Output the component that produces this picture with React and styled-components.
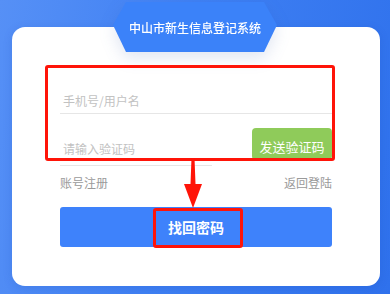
import React from "react";
import styled, { createGlobalStyle } from "styled-components";

const Global = createGlobalStyle`
  html, body { margin: 0; padding: 0; }
  body { font-family: "Noto Sans CJK SC", "Noto Sans", sans-serif; }
  * { box-sizing: border-box; }
`;

const Page = styled.div`
  position: relative;
  width: 390px;
  height: 294px;
  overflow: hidden;
  background: linear-gradient(100deg, #5690f6 0%, #3f80f3 45%, #2f71ec 100%);
  padding: 27px 10px 0 12px;
`;

const Card = styled.div`
  position: relative;
  width: 368px;
  height: 259px;
  background: #fff;
  border-radius: 13px;
  padding: 38px 48px 0 48px;
  box-shadow: 0 2px 10px rgba(20, 60, 160, 0.15);
`;

const BadgeWrap = styled.div`
  position: absolute;
  left: 113px;
  top: 2px;
  width: 164px;
  height: 50px;
  filter: drop-shadow(0 6px 8px rgba(40, 80, 160, 0.14));
  z-index: 2;
`;

const Badge = styled.div`
  width: 100%;
  height: 100%;
  background: #3b82f9;
  clip-path: polygon(13px 0, 151px 0, 164px 23px, 151px 50px, 13px 50px, 0 23px);
  display: flex;
  align-items: center;
  justify-content: center;
  color: #fff;
  font-size: 12px;
  font-weight: 500;
`;

const Field = styled.div`
  display: flex;
  align-items: flex-end;
  height: ${(p) => p.$h}px;
  width: ${(p) => (p.$w ? `${p.$w}px` : "auto")};
  border-bottom: 1px solid #e6e6e6;
  padding: 0 0 ${(p) => p.$pb}px 3px;
  font-size: 12px;
  line-height: 16px;
  color: #c2c2c2;
`;

const Row = styled.div`
  display: flex;
  align-items: flex-start;
  justify-content: space-between;
`;

const SendBtn = styled.div`
  width: 80px;
  height: 32px;
  margin-top: 14px;
  background: #8fcb5a;
  border-radius: 4px;
  color: #fff;
  font-size: 13px;
  display: flex;
  align-items: flex-start;
  justify-content: center;
  padding-top: 11px;
  line-height: 16px;
`;

const Links = styled.div`
  display: flex;
  justify-content: space-between;
  margin-top: 9px;
  font-size: 12px;
  line-height: 16px;
  color: #9a9a9a;
`;

const Submit = styled.div`
  margin-top: 16px;
  height: 40px;
  background: #3e82fb;
  border-radius: 3px;
  color: #fff;
  font-size: 14px;
  font-weight: 700;
  display: flex;
  align-items: center;
  justify-content: center;
`;

const RedBox = styled.div`
  position: absolute;
  left: ${(p) => p.$x}px;
  top: ${(p) => p.$y}px;
  width: ${(p) => p.$w}px;
  height: ${(p) => p.$h}px;
  border: 3px solid #ff1408;
  border-radius: 3px;
  pointer-events: none;
  z-index: 3;
`;

const Arrow = styled.svg`
  position: absolute;
  left: 182px;
  top: 158px;
  z-index: 3;
`;

export default function App() {
  return (
    <>
      <Global />
      <Page>
        <BadgeWrap>
          <Badge>中山市新生信息登记系统</Badge>
        </BadgeWrap>
        <Card>
          <Field $h={49} $pb={4}>手机号/用户名</Field>
          <Row>
            <Field $h={52} $pb={8} $w={152}>请输入验证码</Field>
            <SendBtn>发送验证码</SendBtn>
          </Row>
          <Links>
            <span>账号注册</span>
            <span>返回登陆</span>
          </Links>
          <Submit>找回密码</Submit>
        </Card>
        <RedBox $x={45} $y={65} $w={290} $h={96} />
        <RedBox $x={153} $y={208} $w={90} $h={40} />
        <Arrow width="22" height="52" viewBox="0 0 22 52">
          <polygon points="9.5,0 12.5,0 13.5,26 20,26 11,50 2,26 8.5,26" fill="#ff1408" />
        </Arrow>
      </Page>
    </>
  );
}
